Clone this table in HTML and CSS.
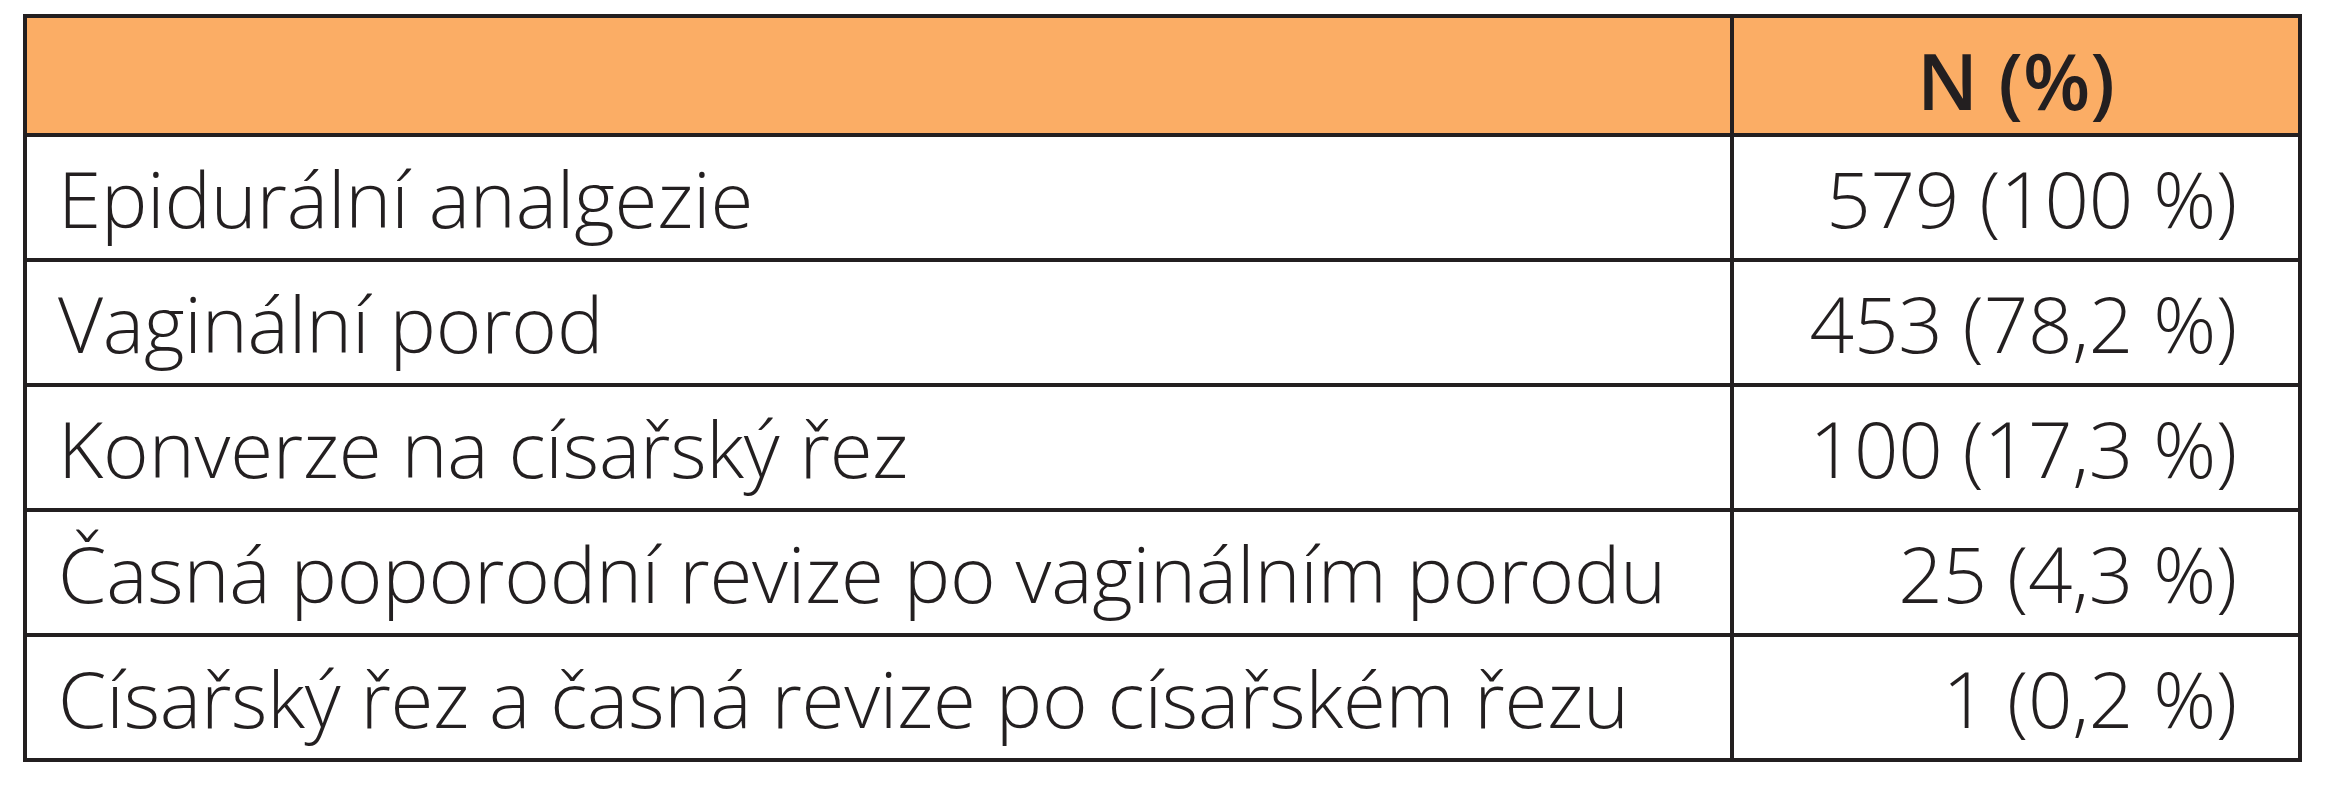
FILE: index.html
```html
<!DOCTYPE html>
<html lang="cs">
<head>
<meta charset="utf-8">
<title>Tabulka</title>
<link rel="stylesheet" href="styles.css">
</head>
<body>
<table class="data">
  <colgroup>
    <col class="c-label">
    <col class="c-value">
  </colgroup>
  <thead>
    <tr class="head">
      <th class="label"></th>
      <th class="value">N (%)</th>
    </tr>
  </thead>
  <tbody>
    <tr><td class="label">Epidurální analgezie</td><td class="value">579 (100 %)</td></tr>
    <tr><td class="label">Vaginální porod</td><td class="value">453 (78,2 %)</td></tr>
    <tr><td class="label">Konverze na císařský řez</td><td class="value">100 (17,3 %)</td></tr>
    <tr><td class="label">Časná poporodní revize po vaginálním porodu</td><td class="value">25 (4,3 %)</td></tr>
    <tr><td class="label">Císařský řez a časná revize po císařském řezu</td><td class="value">1 (0,2 %)</td></tr>
  </tbody>
</table>
</body>
</html>
```
FILE: styles.css
```css
html, body {
  margin: 0;
  padding: 0;
  background: #ffffff;
}

body {
  padding: 14px 0 0 23px;
  font-family: "Open Sans", "DejaVu Sans", sans-serif;
  color: #231f20;
}

.data {
  border-collapse: separate;
  border-spacing: 0;
  table-layout: fixed;
  width: 2279px;
  border-top: 4px solid #231f20;
  border-left: 4px solid #231f20;
}

.c-label { width: 1707px; }
.c-value { width: 568px; }

.data th,
.data td {
  box-sizing: border-box;
  border-right: 4px solid #231f20;
  border-bottom: 4px solid #231f20;
  padding: 0;
  white-space: nowrap;
  vertical-align: middle;
}

.head th {
  height: 119px;
  background: #fbad65;
  font-weight: 600;
  font-size: 78px;
  text-align: center;
  padding-top: 8px;
}

.data td {
  height: 125px;
  font-weight: 300;
  font-size: 78px;
  letter-spacing: -0.2px;
}

.data td.label {
  text-align: left;
  padding-left: 31px;
}

.data td.value {
  text-align: right;
  padding-right: 61px;
}
```
